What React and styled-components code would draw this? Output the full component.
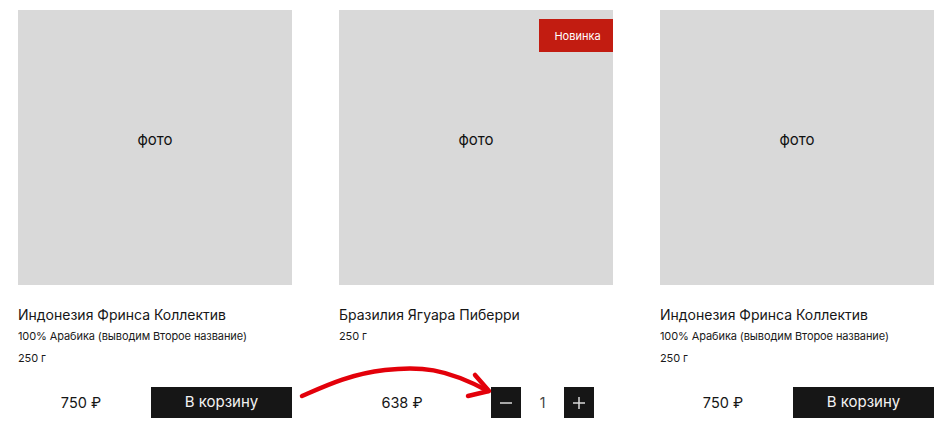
import React from 'react';
import styled, { createGlobalStyle } from 'styled-components';

const GlobalStyle = createGlobalStyle`
  body {
    margin: 0;
    background: #fff;
    font-family: Inter, "Noto Sans", sans-serif;
    color: #111;
  }
`;

const Page = styled.div`
  position: relative;
  padding: 10px 0 0 18px;
`;

const Grid = styled.div`
  display: grid;
  grid-template-columns: repeat(3, 274px);
  column-gap: 47px;
`;

const Card = styled.div`
  display: flex;
  flex-direction: column;
  height: 408px;
`;

const Photo = styled.div`
  position: relative;
  height: 275px;
  background: #d9d9d9;
  display: flex;
  align-items: center;
  justify-content: center;
  font-size: 15px;
  color: #111;
  padding-bottom: 17px;
  box-sizing: border-box;
`;

const Badge = styled.span`
  position: absolute;
  top: 9px;
  right: 0;
  width: 74px;
  height: 33px;
  display: flex;
  align-items: center;
  justify-content: center;
  padding-left: 3px;
  box-sizing: border-box;
  background: #c21c11;
  color: #fff;
  font-size: 11px;
`;

const Title = styled.div`
  margin-top: 21px;
  font-size: 14px;
  line-height: 18px;
  color: #161616;
`;

const Meta = styled.div`
  margin-top: ${p => p.$gap}px;
  font-size: 11px;
  letter-spacing: -0.1px;
  line-height: 14px;
  color: #1a1a1a;
`;

const Footer = styled.div`
  margin-top: auto;
  display: grid;
  grid-template-columns: 133px 141px;
  height: 31px;
`;

const Price = styled.div`
  display: flex;
  align-items: center;
  justify-content: center;
  padding-right: 7px;
  font-size: 14.5px;
  color: #161616;
`;

const CartButton = styled.button`
  border: 0;
  margin: 0;
  padding: 0 0 2px;
  background: #161616;
  color: #f2f2f2;
  font-family: inherit;
  font-size: 15px;
`;

const Counter = styled.div`
  display: flex;
  align-items: center;
  justify-content: center;
`;

const StepButton = styled.button`
  width: 30px;
  height: 31px;
  border: 0;
  margin: 0;
  padding: 0;
  background: #161616;
  display: flex;
  align-items: center;
  justify-content: center;
`;

const Count = styled.span`
  width: 43px;
  text-align: center;
  font-size: 14px;
  color: #444;
`;

const Arrow = styled.svg`
  position: absolute;
  left: 0;
  top: 0;
  pointer-events: none;
`;

const products = [
  { title: 'Индонезия Фринса Коллектив', sub: '100% Арабика (выводим Второе название)', weight: '250 г', price: '750 ₽' },
  { title: 'Бразилия Ягуара Пиберри', weight: '250 г', price: '638 ₽', isNew: true, inCart: 1 },
  { title: 'Индонезия Фринса Коллектив', sub: '100% Арабика (выводим Второе название)', weight: '250 г', price: '750 ₽' },
];

const Sign = ({ plus }) => (
  <svg width="12" height="12" viewBox="0 0 12 12">
    <path d={plus ? 'M0 6H12M6 0V12' : 'M0 6H12'} stroke="#d8d8d8" strokeWidth="1.5" />
  </svg>
);

const Product = ({ p }) => (
  <Card>
    <Photo>
      фото
      {p.isNew && <Badge>Новинка</Badge>}
    </Photo>
    <Title>{p.title}</Title>
    {p.sub && <Meta $gap={5}>{p.sub}</Meta>}
    <Meta $gap={p.sub ? 8 : 5}>{p.weight}</Meta>
    <Footer>
      <Price>{p.price}</Price>
      {p.inCart ? (
        <Counter>
          <StepButton><Sign /></StepButton>
          <Count>{p.inCart}</Count>
          <StepButton><Sign plus /></StepButton>
        </Counter>
      ) : (
        <CartButton>В корзину</CartButton>
      )}
    </Footer>
  </Card>
);

export default function App() {
  return (
    <Page>
      <GlobalStyle />
      <Grid>
        {products.map((p, i) => <Product key={i} p={p} />)}
      </Grid>
      <Arrow width="951" height="445">
        <g fill="none" stroke="#e3000a" strokeWidth="4.5" strokeLinecap="round" strokeLinejoin="round">
          <path d="M302 396 C 325 386, 350 374, 385 370 C 420 366, 445 368, 488 391" />
          <path d="M475 375 L 489 391 L 468 396" />
        </g>
      </Arrow>
    </Page>
  );
}
